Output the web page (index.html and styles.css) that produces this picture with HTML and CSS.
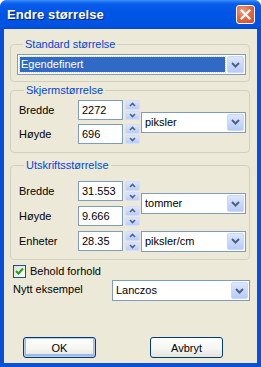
FILE: index.html
```html
<!DOCTYPE html>
<html>

<head>
  <title>Endre størrelse</title>

  <link rel="stylesheet" href="styles.css">
</head>

<body>

  <div class="window">
    <div class="titlebar">
      <span class="title">Endre størrelse</span>
      <span class="close">
        <svg width="11" height="11" viewBox="0 0 11 11"><path d="M1.5 1.5 L9.5 9.5 M9.5 1.5 L1.5 9.5" stroke="white" stroke-width="2.2" stroke-linecap="square"/></svg>
      </span>
    </div>

    <div class="client">

      <fieldset class="group group-std">
        <legend>Standard størrelse</legend>
        <div class="combo combo-focus">
          <span class="combo-text"><span class="selected">Egendefinert</span></span>
          <span class="combo-btn"><svg width="9" height="6" viewBox="0 0 9 6"><path d="M1 1 L4.5 4.5 L8 1" fill="none" stroke="#4D6185" stroke-width="2"/></svg></span>
        </div>
      </fieldset>

      <fieldset class="group group-screen">
        <legend>Skjermstørrelse</legend>
        <div class="grid">
          <span class="label">Bredde</span>
          <div class="num"><span class="input">2272</span><span class="spin"><span class="spin-btn"><svg width="7" height="5" viewBox="0 0 7 5"><path d="M1 4 L3.5 1.5 L6 4" fill="none" stroke="#4D6185" stroke-width="1.6"/></svg></span><span class="spin-btn"><svg width="7" height="5" viewBox="0 0 7 5"><path d="M1 1 L3.5 3.5 L6 1" fill="none" stroke="#4D6185" stroke-width="1.6"/></svg></span></span></div>
          <div class="combo span2">
            <span class="combo-text">piksler</span>
            <span class="combo-btn"><svg width="9" height="6" viewBox="0 0 9 6"><path d="M1 1 L4.5 4.5 L8 1" fill="none" stroke="#4D6185" stroke-width="2"/></svg></span>
          </div>
          <span class="label">Høyde</span>
          <div class="num"><span class="input">696</span><span class="spin"><span class="spin-btn"><svg width="7" height="5" viewBox="0 0 7 5"><path d="M1 4 L3.5 1.5 L6 4" fill="none" stroke="#4D6185" stroke-width="1.6"/></svg></span><span class="spin-btn"><svg width="7" height="5" viewBox="0 0 7 5"><path d="M1 1 L3.5 3.5 L6 1" fill="none" stroke="#4D6185" stroke-width="1.6"/></svg></span></span></div>
        </div>
      </fieldset>

      <fieldset class="group group-print">
        <legend>Utskriftsstørrelse</legend>
        <div class="grid grid-print">
          <span class="label">Bredde</span>
          <div class="num"><span class="input">31.553</span><span class="spin"><span class="spin-btn"><svg width="7" height="5" viewBox="0 0 7 5"><path d="M1 4 L3.5 1.5 L6 4" fill="none" stroke="#4D6185" stroke-width="1.6"/></svg></span><span class="spin-btn"><svg width="7" height="5" viewBox="0 0 7 5"><path d="M1 1 L3.5 3.5 L6 1" fill="none" stroke="#4D6185" stroke-width="1.6"/></svg></span></span></div>
          <div class="combo span2">
            <span class="combo-text">tommer</span>
            <span class="combo-btn"><svg width="9" height="6" viewBox="0 0 9 6"><path d="M1 1 L4.5 4.5 L8 1" fill="none" stroke="#4D6185" stroke-width="2"/></svg></span>
          </div>
          <span class="label">Høyde</span>
          <div class="num"><span class="input">9.666</span><span class="spin"><span class="spin-btn"><svg width="7" height="5" viewBox="0 0 7 5"><path d="M1 4 L3.5 1.5 L6 4" fill="none" stroke="#4D6185" stroke-width="1.6"/></svg></span><span class="spin-btn"><svg width="7" height="5" viewBox="0 0 7 5"><path d="M1 1 L3.5 3.5 L6 1" fill="none" stroke="#4D6185" stroke-width="1.6"/></svg></span></span></div>
          <span class="label">Enheter</span>
          <div class="num"><span class="input">28.35</span><span class="spin"><span class="spin-btn"><svg width="7" height="5" viewBox="0 0 7 5"><path d="M1 4 L3.5 1.5 L6 4" fill="none" stroke="#4D6185" stroke-width="1.6"/></svg></span><span class="spin-btn"><svg width="7" height="5" viewBox="0 0 7 5"><path d="M1 1 L3.5 3.5 L6 1" fill="none" stroke="#4D6185" stroke-width="1.6"/></svg></span></span></div>
          <div class="combo">
            <span class="combo-text">piksler/cm</span>
            <span class="combo-btn"><svg width="9" height="6" viewBox="0 0 9 6"><path d="M1 1 L4.5 4.5 L8 1" fill="none" stroke="#4D6185" stroke-width="2"/></svg></span>
          </div>
        </div>
      </fieldset>

      <div class="check-row">
        <span class="checkbox"><svg width="9" height="9" viewBox="0 0 9 9"><path d="M1 4 L3.5 6.5 L8 1.5" fill="none" stroke="#21A121" stroke-width="2"/></svg></span>
        <span>Behold forhold</span>
      </div>

      <div class="resample-row">
        <span class="resample-label">Nytt eksempel</span>
        <div class="combo combo-wide">
          <span class="combo-text">Lanczos</span>
          <span class="combo-btn"><svg width="9" height="6" viewBox="0 0 9 6"><path d="M1 1 L4.5 4.5 L8 1" fill="none" stroke="#4D6185" stroke-width="2"/></svg></span>
        </div>
      </div>

      <div class="buttons">
        <span class="button button-default">OK</span>
        <span class="button">Avbryt</span>
      </div>

    </div>
  </div>

</body>

</html>
```

FILE: styles.css
```css
body {
  margin: 0;
  padding: 0;
  font-family: "Liberation Sans", Arial, sans-serif;
  font-size: 11px;
  color: black;
  background: white;
}

.window {
  width: 261px;
  height: 367px;
  display: flex;
  flex-direction: column;
  background: #0A4FD8;
  border-radius: 7px 7px 0 0;
  overflow: hidden;
}

.titlebar {
  height: 29px;
  flex: none;
  display: flex;
  align-items: center;
  justify-content: space-between;
  padding: 0 6px 0 7px;
  background: linear-gradient(to bottom, #3C95FE 0, #1F6FF2 2px, #0A5DEB 4px, #0055E5 12px, #0054E3 22px, #0052E0 27px, #0148CF 29px);
}

.title {
  color: white;
  font-weight: bold;
  font-size: 13px;
  text-shadow: 1px 1px 0 #0A1E8A;
  letter-spacing: 0.1px;
}

.close {
  width: 19px;
  height: 19px;
  box-sizing: border-box;
  border: 1px solid white;
  border-radius: 3px;
  background: radial-gradient(circle at 35% 30%, #F0A08A 0, #E36846 45%, #D24A26 100%);
  display: flex;
  align-items: center;
  justify-content: center;
}

.client {
  flex: 1;
  margin: 0 4px 4px 4px;
  background: #ECE9D8;
  padding: 9px 7px 0 6px;
  display: flex;
  flex-direction: column;
}

.group {
  margin: 0;
  border: 1px solid #D0D0BF;
  border-radius: 4px;
  padding: 0;
}

.group legend {
  color: #0046D5;
  margin-left: 6px;
  padding: 0 2px;
  line-height: 13px;
}

.group-std {
  padding: 3px 3px 6px 6px;
}

.group-screen {
  margin-top: 2px;
  padding: 3px 3px 8px 7px;
}

.group-print {
  margin-top: 6px;
  padding: 9px 3px 8px 7px;
}

.grid {
  display: grid;
  grid-template-columns: 60px 63px 1fr;
  grid-template-rows: 20px 20px;
  row-gap: 4px;
  align-items: center;
}

.grid-print {
  grid-template-rows: 20px 20px 20px;
  row-gap: 5px;
}

.span2 {
  grid-row: span 2;
}

.label {
  padding-left: 1px;
}

.num {
  display: flex;
  gap: 2px;
  height: 20px;
}

.input {
  width: 45px;
  box-sizing: border-box;
  border: 1px solid #7F9DB9;
  background: white;
  padding: 0 3px;
  line-height: 18px;
}

.spin {
  width: 15px;
  display: flex;
  flex-direction: column;
  gap: 1px;
}

.spin-btn {
  flex: 1;
  background: linear-gradient(to bottom, #DCE6FD, #BACDF9);
  border: 1px solid #D2DEFC;
  border-radius: 2px;
  display: flex;
  align-items: center;
  justify-content: center;
}

.combo {
  height: 21px;
  box-sizing: border-box;
  border: 1px solid #7F9DB9;
  background: white;
  display: flex;
  padding: 1px;
}

.combo-text {
  flex: 1;
  padding-left: 2px;
  line-height: 17px;
}

.combo-btn {
  width: 15px;
  background: linear-gradient(to bottom, #DCE6FD, #B7CBF8);
  border: 1px solid #CAD8FB;
  border-radius: 2px;
  display: flex;
  align-items: center;
  justify-content: center;
}

.combo-focus .combo-text {
  padding: 1px 2px 1px 1px;
}

.selected {
  display: block;
  height: 15px;
  background: #316AC5;
  color: white;
  outline: 1px dotted #F6D28C;
  line-height: 15px;
  padding-left: 1px;
}

.check-row {
  display: flex;
  align-items: center;
  gap: 4px;
  margin-top: 4px;
  padding-left: 3px;
  height: 14px;
}

.checkbox {
  width: 13px;
  height: 13px;
  box-sizing: border-box;
  border: 1px solid #1C5180;
  background: linear-gradient(135deg, #DCDCD7, #FFFFFF);
  display: flex;
  align-items: center;
  justify-content: center;
}

.resample-row {
  display: flex;
  align-items: flex-start;
  margin-top: 2px;
  padding-left: 3px;
}

.resample-label {
  width: 99px;
  padding-top: 3px;
}

.combo-wide {
  flex: 1;
  margin-right: 0;
}

.buttons {
  display: flex;
  gap: 54px;
  margin-top: 36px;
  padding-left: 13px;
}

.button {
  width: 73px;
  height: 21px;
  box-sizing: border-box;
  border: 1px solid #003C74;
  border-radius: 3px;
  background: linear-gradient(to bottom, #FFFFFF 0, #F4F4F0 60%, #E3E2DA 100%);
  display: flex;
  align-items: center;
  justify-content: center;
}

.button-default {
  box-shadow: inset 0 0 0 1px #B7CBF4, inset 0 -1px 0 2px #9DB9EB;
}
```
